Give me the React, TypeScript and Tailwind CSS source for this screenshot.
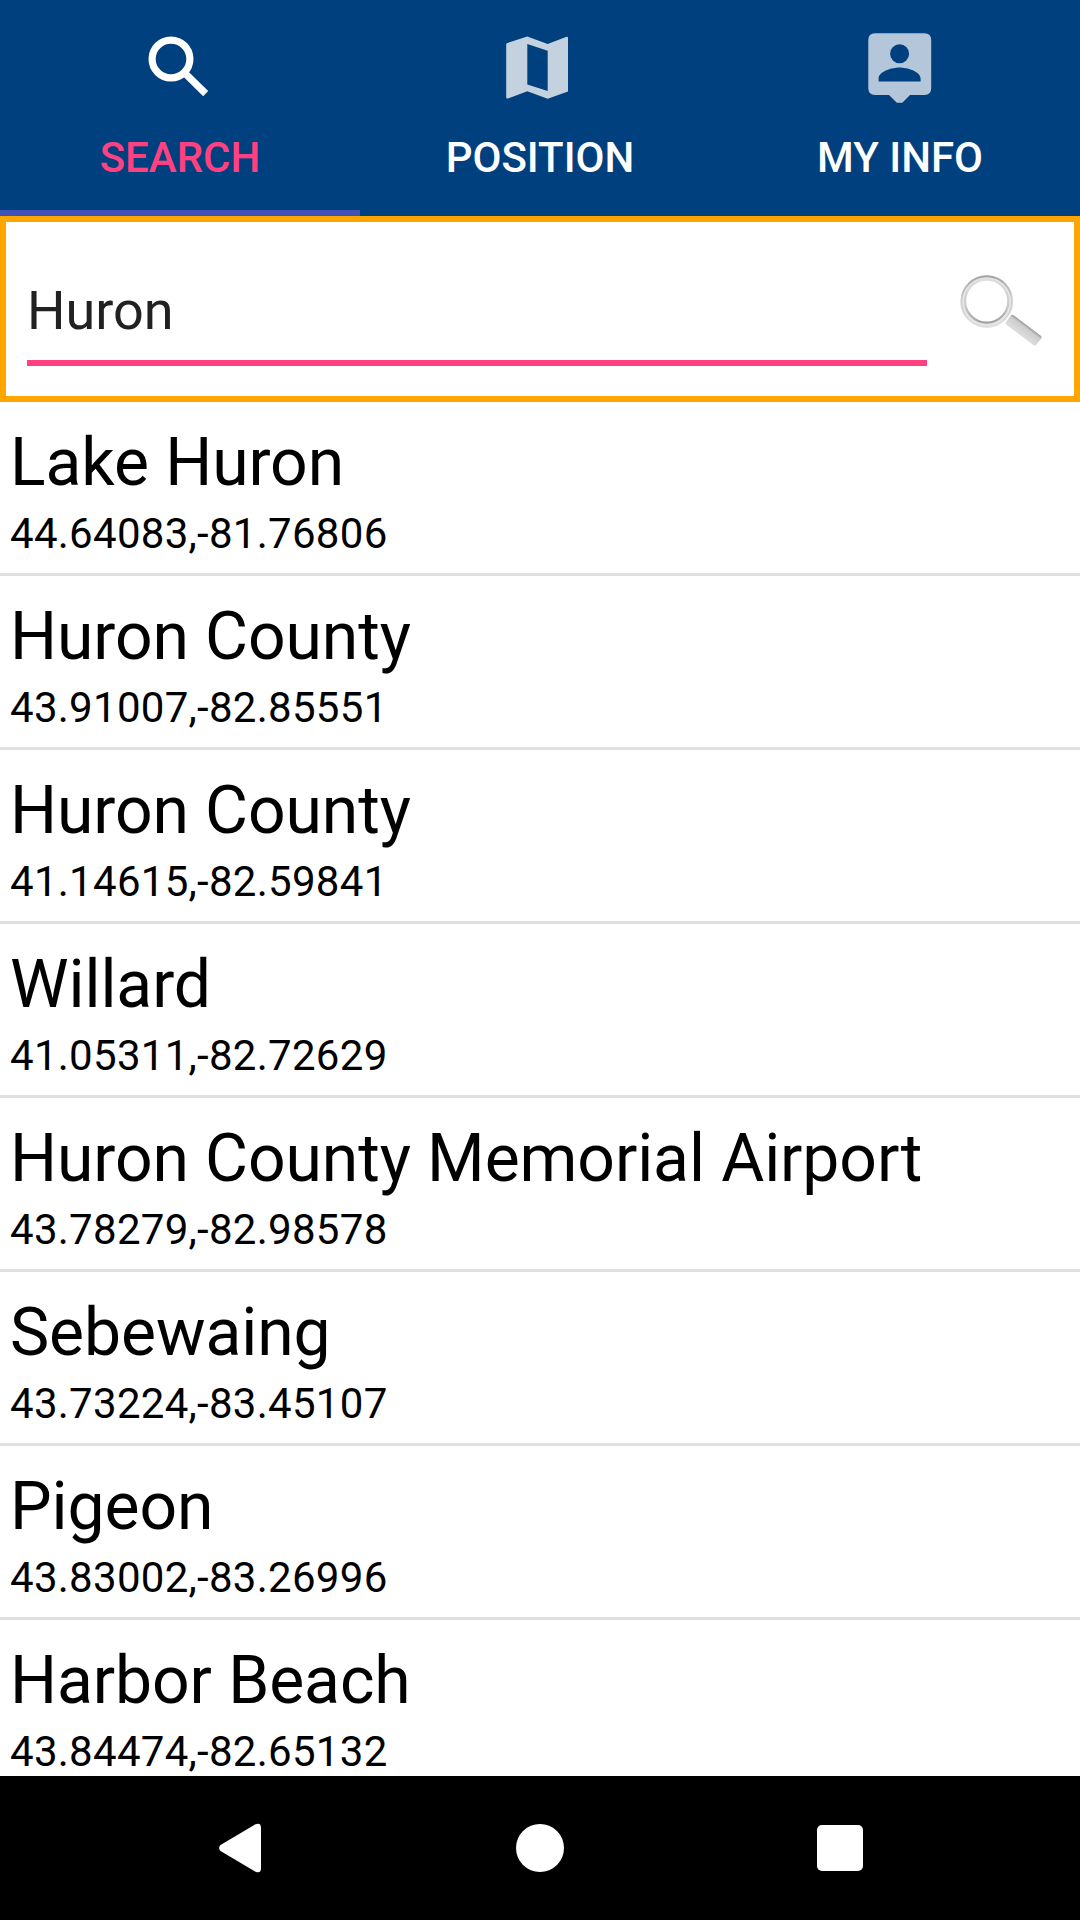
import type { ReactNode } from "react";

type Place = { name: string; coords: string };

const places: Place[] = [
  { name: "Lake Huron", coords: "44.64083,-81.76806" },
  { name: "Huron County", coords: "43.91007,-82.85551" },
  { name: "Huron County", coords: "41.14615,-82.59841" },
  { name: "Willard", coords: "41.05311,-82.72629" },
  { name: "Huron County Memorial Airport", coords: "43.78279,-82.98578" },
  { name: "Sebewaing", coords: "43.73224,-83.45107" },
  { name: "Pigeon", coords: "43.83002,-83.26996" },
  { name: "Harbor Beach", coords: "43.84474,-82.65132" },
];

function SearchIcon() {
  return (
    <svg className="size-[84px]" viewBox="138 26 84 84" fill="none" stroke="#fff">
      <circle cx="171" cy="59" r="18.9" strokeWidth="7.2" />
      <path d="M186 74.2L205.7 93.6" strokeWidth="7.2" />
    </svg>
  );
}

function MapIcon() {
  return (
    <svg className="size-[84px]" viewBox="498 26 84 84" fill="#c4d2e0">
      <path
        fillRule="evenodd"
        d="M507.4 43L527.3 36.6L547.7 44L566.5 36.8Q568 36.4 568 38V91.5L547.7 98.7L527.3 91.3L508 98.4Q506.2 99 506.2 97.5V44.5Q506.2 43.4 507.4 43ZM527.3 44V84.6L547.7 91V50.8Z"
      />
    </svg>
  );
}

function PersonPinIcon() {
  return (
    <svg className="size-[84px]" viewBox="858 26 84 84" fill="#b3c6da">
      <path
        fillRule="evenodd"
        d="M875 33.2H924.5Q931.2 33.2 931.2 40V88.3Q931.2 95 924.5 95H910L902.3 102.8H896.8L889 95H875Q868.3 95 868.3 88.3V40Q868.3 33.2 875 33.2ZM899.6 44.2A9.5 9.5 0 1 0 899.6 63.2A9.5 9.5 0 1 0 899.6 44.2ZM878.6 81.4H920.6V78.5C920.6 71.3 906.8 67.4 899.6 67.4C892.4 67.4 878.6 71.3 878.6 78.5Z"
      />
    </svg>
  );
}

function Tab({ label, icon, active }: { label: string; icon: ReactNode; active?: boolean }) {
  return (
    <button
      className={
        active
          ? "flex h-[216px] flex-col items-center border-b-[6px] border-[#3f51b5] pt-[26px] text-[#ff4081]"
          : "flex h-[216px] flex-col items-center border-b-[6px] border-transparent pt-[26px] text-white"
      }
    >
      {icon}
      <span className="mt-[23px] text-[42px] leading-[50px] font-medium">{label}</span>
    </button>
  );
}

function Magnifier() {
  return (
    <svg className="h-[90px] w-[96px]" viewBox="954 264 96 90" fill="none">
      <defs>
        <linearGradient id="rimOuter" x1="0" y1="0" x2="0" y2="1">
          <stop offset="0" stopColor="#a3a3a3" />
          <stop offset="0.45" stopColor="#cfcfcf" />
          <stop offset="1" stopColor="#dedede" />
        </linearGradient>
        <linearGradient id="rimInner" x1="0" y1="0" x2="0" y2="1">
          <stop offset="0" stopColor="#dedede" />
          <stop offset="0.6" stopColor="#cccccc" />
          <stop offset="1" stopColor="#a0a0a0" />
        </linearGradient>
        <linearGradient id="handle" x1="0" y1="0" x2="0" y2="1">
          <stop offset="0" stopColor="#999999" />
          <stop offset="0.25" stopColor="#cdcdcd" />
          <stop offset="1" stopColor="#dedede" />
        </linearGradient>
      </defs>
      <circle cx="986.7" cy="300.5" r="23.5" stroke="#e6e6e6" strokeWidth="5" />
      <circle cx="986.7" cy="300.5" r="25.3" stroke="url(#rimOuter)" strokeWidth="2" />
      <circle cx="986.7" cy="300" r="21.6" stroke="url(#rimInner)" strokeWidth="2.2" />
      <g transform="translate(1012 313) rotate(37)">
        <rect width="38" height="12" rx="2" fill="url(#handle)" />
      </g>
    </svg>
  );
}

export default function App() {
  return (
    <div className="flex h-[1920px] w-[1080px] flex-col overflow-hidden bg-white font-[Roboto,sans-serif]">
      <nav className="grid shrink-0 grid-cols-3 bg-[#01407f]">
        <Tab label="SEARCH" icon={<SearchIcon />} active />
        <Tab label="POSITION" icon={<MapIcon />} />
        <Tab label="MY INFO" icon={<PersonPinIcon />} />
      </nav>

      <form className="flex h-[186px] shrink-0 items-start border-[6px] border-[#ffa500] pl-[21px]">
        <input
          readOnly
          value="Huron"
          className="mt-[42px] h-[102px] w-[900px] border-b-[6px] border-[#ff4081] pt-[14px] pb-[18px] text-[54px] leading-[64px] text-[#212121] outline-none"
        />
        <button type="button" className="mt-[43px] ml-[27px]" aria-label="Search">
          <Magnifier />
        </button>
      </form>

      <ul className="min-h-0 flex-1 overflow-hidden text-black">
        {places.map((place, i) => (
          <li key={i} className="h-[174px] border-b-[3px] border-[#e0e0e0] pt-[22px] pl-[10px]">
            <div className="text-[66px] leading-[78px] tracking-[-0.09px]">{place.name}</div>
            <div className="mt-[7px] text-[42px] leading-[50px] tracking-[0.28px]">{place.coords}</div>
          </li>
        ))}
      </ul>

      <footer className="grid h-[144px] shrink-0 grid-cols-[240px_600px_240px] items-center bg-black">
        <svg className="ml-[216px] h-[60px] w-[48px]" viewBox="216 1818 48 60" fill="#fff">
          <path d="M220.5 1845L255.5 1824.3Q261 1822 261 1828V1868Q261 1874 255.5 1871.7L220.5 1851Q217.6 1848 220.5 1845Z" />
        </svg>
        <span className="size-[48px] justify-self-center rounded-full bg-white" />
        <span className="-ml-[23px] size-[46px] rounded-[5px] bg-white" />
      </footer>
    </div>
  );
}
